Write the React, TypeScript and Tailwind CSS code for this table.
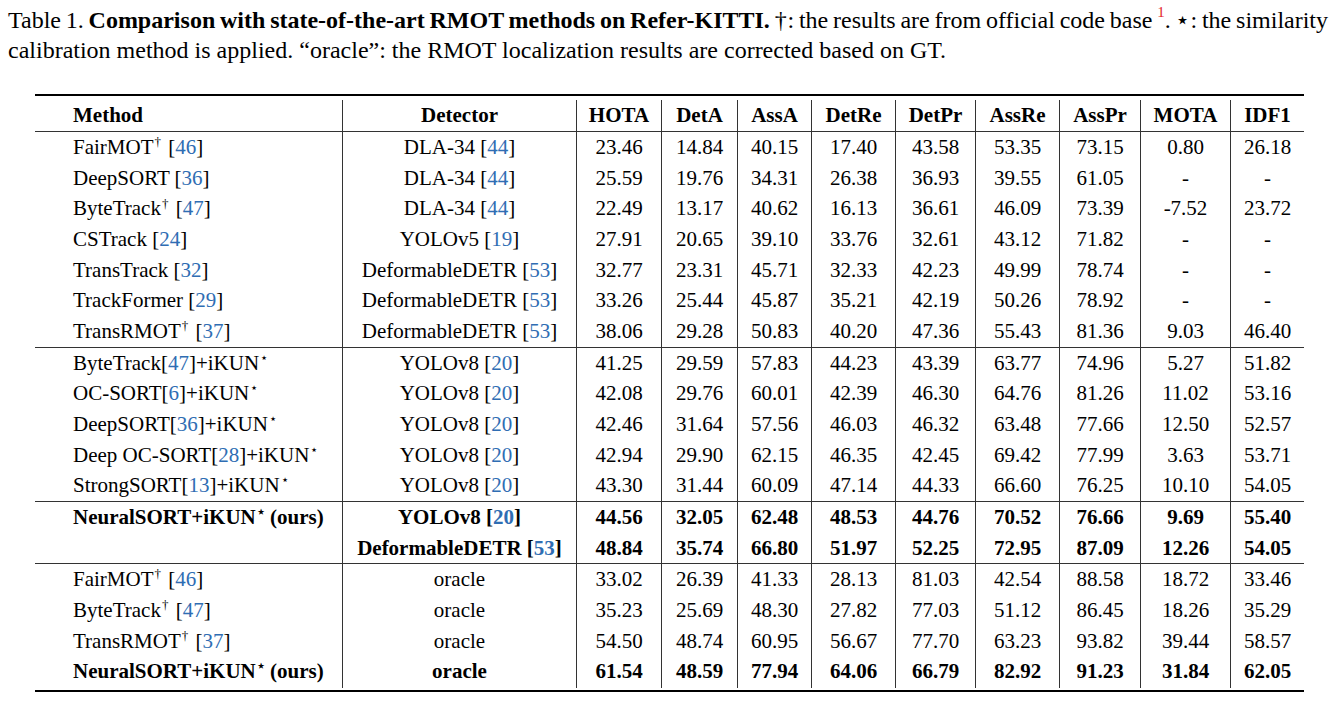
import React from "react";

// citation reference in blue
const Cite = ({ n }: { n: string | number }) => (
  <span className="text-[#2f6db3]">{n}</span>
);

const Dag = () => <sup className="text-[13px] top-[-0.6em] ml-[1px] mr-[2px]">†</sup>;
const Star = () => <sup className="text-[13px] top-[-0.6em] ml-[1px]">⋆</sup>;

type Row = {
  method: React.ReactNode;
  detector: React.ReactNode;
  values: string[];
  bold?: boolean;
};

const yolo8 = <>YOLOv8 [<Cite n={20} />]</>;
const ddetr = <>DeformableDETR [<Cite n={53} />]</>;
const dla = <>DLA-34 [<Cite n={44} />]</>;

const groups: Row[][] = [
  [
    {
      method: <>FairMOT<Dag /> [<Cite n={46} />]</>,
      detector: dla,
      values: ["23.46", "14.84", "40.15", "17.40", "43.58", "53.35", "73.15", "0.80", "26.18"],
    },
    {
      method: <>DeepSORT [<Cite n={36} />]</>,
      detector: dla,
      values: ["25.59", "19.76", "34.31", "26.38", "36.93", "39.55", "61.05", "-", "-"],
    },
    {
      method: <>ByteTrack<Dag /> [<Cite n={47} />]</>,
      detector: dla,
      values: ["22.49", "13.17", "40.62", "16.13", "36.61", "46.09", "73.39", "-7.52", "23.72"],
    },
    {
      method: <>CSTrack [<Cite n={24} />]</>,
      detector: <>YOLOv5 [<Cite n={19} />]</>,
      values: ["27.91", "20.65", "39.10", "33.76", "32.61", "43.12", "71.82", "-", "-"],
    },
    {
      method: <>TransTrack [<Cite n={32} />]</>,
      detector: ddetr,
      values: ["32.77", "23.31", "45.71", "32.33", "42.23", "49.99", "78.74", "-", "-"],
    },
    {
      method: <>TrackFormer [<Cite n={29} />]</>,
      detector: ddetr,
      values: ["33.26", "25.44", "45.87", "35.21", "42.19", "50.26", "78.92", "-", "-"],
    },
    {
      method: <>TransRMOT<Dag /> [<Cite n={37} />]</>,
      detector: ddetr,
      values: ["38.06", "29.28", "50.83", "40.20", "47.36", "55.43", "81.36", "9.03", "46.40"],
    },
  ],
  [
    {
      method: <>ByteTrack[<Cite n={47} />]+iKUN<Star /></>,
      detector: yolo8,
      values: ["41.25", "29.59", "57.83", "44.23", "43.39", "63.77", "74.96", "5.27", "51.82"],
    },
    {
      method: <>OC-SORT[<Cite n={6} />]+iKUN<Star /></>,
      detector: yolo8,
      values: ["42.08", "29.76", "60.01", "42.39", "46.30", "64.76", "81.26", "11.02", "53.16"],
    },
    {
      method: <>DeepSORT[<Cite n={36} />]+iKUN<Star /></>,
      detector: yolo8,
      values: ["42.46", "31.64", "57.56", "46.03", "46.32", "63.48", "77.66", "12.50", "52.57"],
    },
    {
      method: <>Deep OC-SORT[<Cite n={28} />]+iKUN<Star /></>,
      detector: yolo8,
      values: ["42.94", "29.90", "62.15", "46.35", "42.45", "69.42", "77.99", "3.63", "53.71"],
    },
    {
      method: <>StrongSORT[<Cite n={13} />]+iKUN<Star /></>,
      detector: yolo8,
      values: ["43.30", "31.44", "60.09", "47.14", "44.33", "66.60", "76.25", "10.10", "54.05"],
    },
  ],
  [
    {
      method: <>NeuralSORT+iKUN<Star /> (ours)</>,
      detector: yolo8,
      values: ["44.56", "32.05", "62.48", "48.53", "44.76", "70.52", "76.66", "9.69", "55.40"],
      bold: true,
    },
    {
      method: null,
      detector: ddetr,
      values: ["48.84", "35.74", "66.80", "51.97", "52.25", "72.95", "87.09", "12.26", "54.05"],
      bold: true,
    },
  ],
  [
    {
      method: <>FairMOT<Dag /> [<Cite n={46} />]</>,
      detector: "oracle",
      values: ["33.02", "26.39", "41.33", "28.13", "81.03", "42.54", "88.58", "18.72", "33.46"],
    },
    {
      method: <>ByteTrack<Dag /> [<Cite n={47} />]</>,
      detector: "oracle",
      values: ["35.23", "25.69", "48.30", "27.82", "77.03", "51.12", "86.45", "18.26", "35.29"],
    },
    {
      method: <>TransRMOT<Dag /> [<Cite n={37} />]</>,
      detector: "oracle",
      values: ["54.50", "48.74", "60.95", "56.67", "77.70", "63.23", "93.82", "39.44", "58.57"],
    },
    {
      method: <>NeuralSORT+iKUN<Star /> (ours)</>,
      detector: "oracle",
      values: ["61.54", "48.59", "77.94", "64.06", "66.79", "82.92", "91.23", "31.84", "62.05"],
      bold: true,
    },
  ],
];

const metrics = ["HOTA", "DetA", "AssA", "DetRe", "DetPr", "AssRe", "AssPr", "MOTA", "IDF1"];

const gridCols =
  "grid grid-cols-[307px_234px_85px_76px_74px_84px_80px_84px_81px_90px_74px]";

function DataRow({ row }: { row: Row }) {
  return (
    <div className={`${gridCols} h-[30.67px] ${row.bold ? "font-bold" : ""}`}>
      <div className="flex items-center pl-[38px]">
        <span className="whitespace-pre">{row.method}</span>
      </div>
      <div className="flex items-center justify-center border-l border-[#333]">
        <span className="whitespace-pre">{row.detector}</span>
      </div>
      {row.values.map((v, i) => (
        <div key={i} className="flex items-center justify-center border-l border-[#333]">
          {v}
        </div>
      ))}
    </div>
  );
}

export default function App() {
  return (
    <div className="w-[1337px] h-[705px] bg-white text-black font-[family-name:Liberation_Serif,Times_New_Roman,serif] text-[21px] overflow-hidden">
      {/* caption */}
      <div className="pl-[8px] pt-[5px] text-[24px] leading-[30px]">
        <div className="w-[1320px] text-justify [text-align-last:justify] [word-spacing:-2px]">
          Table 1.{" "}
          <span className="font-bold">
            Comparison with state-of-the-art RMOT methods on Refer-KITTI.
          </span>{" "}
          †: the results are from official code base{" "}
          <sup className="text-[15px] text-[#e3231f] top-[-0.75em]">1</sup>. ⋆: the similarity
        </div>
        <div>
          calibration method is applied. “oracle”: the RMOT localization results are corrected
          based on GT.
        </div>
      </div>

      {/* table */}
      <div className="ml-[35px] mt-[29px] w-[1269px]">
        <div className="h-[2px] bg-black" />
        <div className="h-[4px]" />
        <div className={`${gridCols} h-[32px] border-b border-[#333] font-bold`}>
          <div className="flex items-center pl-[38px]">Method</div>
          <div className="flex items-center justify-center border-l border-[#333]">Detector</div>
          {metrics.map((m) => (
            <div key={m} className="flex items-center justify-center border-l border-[#333]">
              {m}
            </div>
          ))}
        </div>
        {groups.map((g, gi) => (
          <div key={gi} className={gi < groups.length - 1 ? "border-b border-[#333]" : ""}>
            {g.map((r, ri) => (
              <DataRow key={ri} row={r} />
            ))}
          </div>
        ))}
        <div className="h-[3px]" />
        <div className="h-[2px] bg-black" />
      </div>
    </div>
  );
}
